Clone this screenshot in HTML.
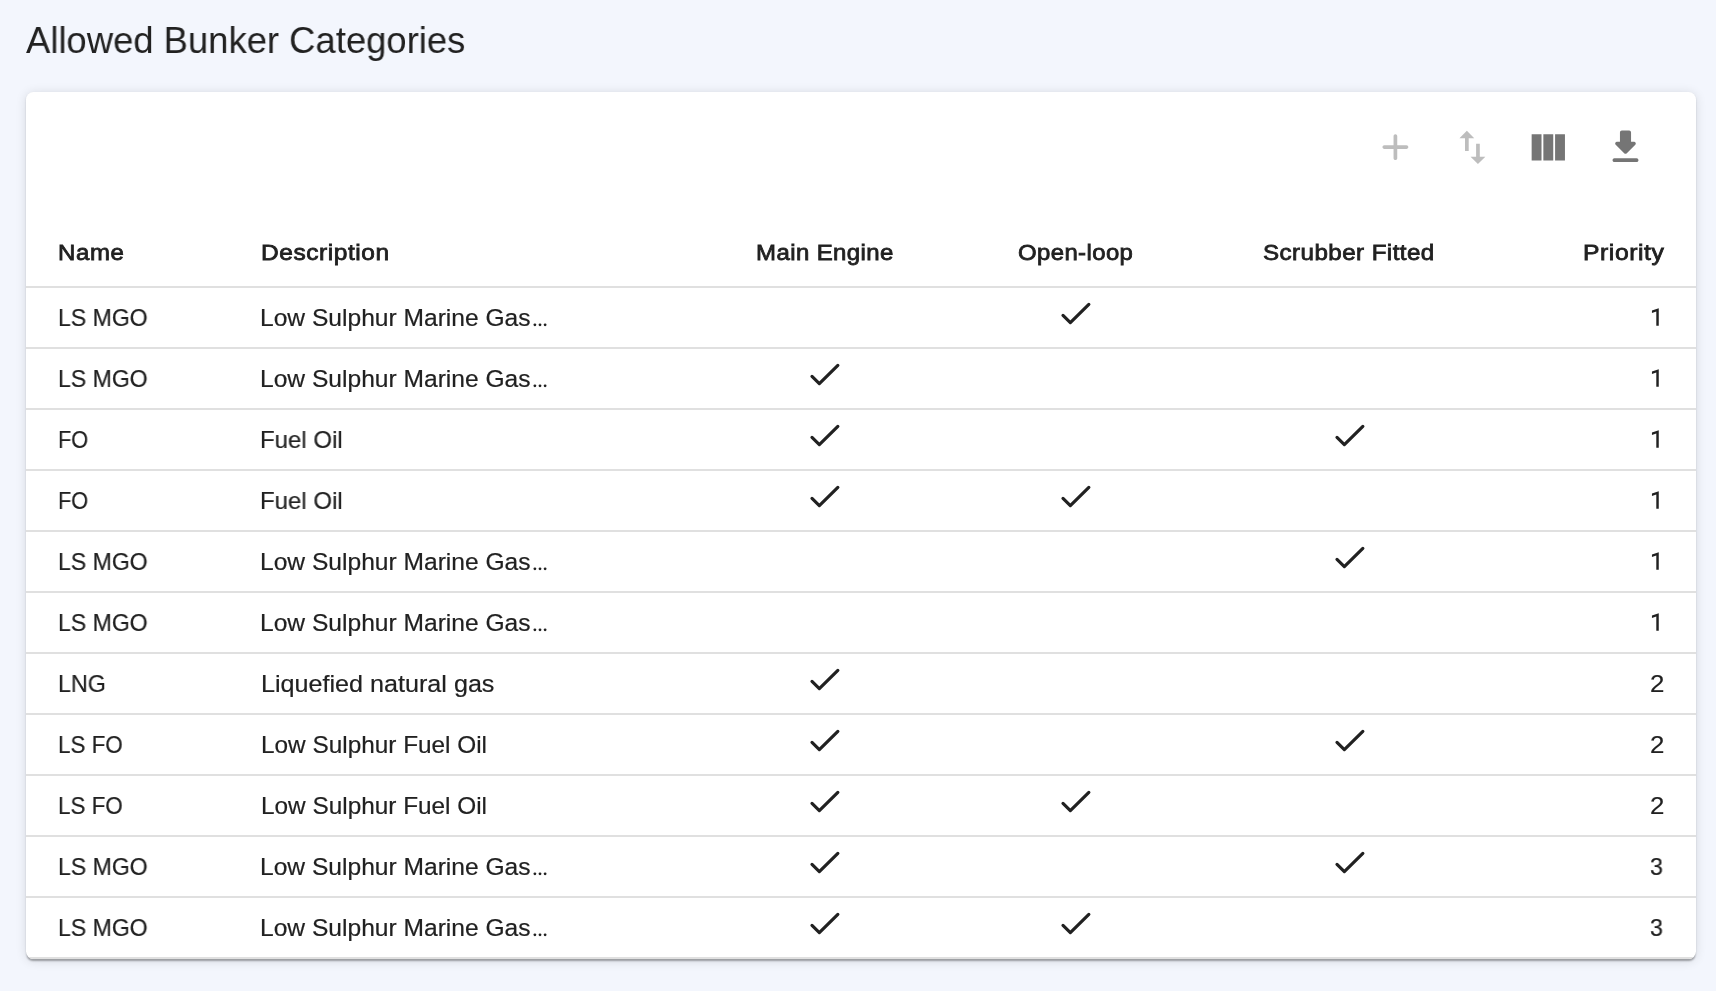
<!DOCTYPE html>
<html><head><meta charset="utf-8"><title>Allowed Bunker Categories</title><style>
html,body{margin:0;padding:0;}
body{width:1716px;height:1004px;background:#fff;position:relative;overflow:hidden;font-family:"Liberation Sans",sans-serif;color:#212121;}
.bg{position:absolute;left:0;top:0;width:1716px;height:991px;background:#f3f6fd;}
.title{will-change:transform;position:absolute;font-size:37px;line-height:37px;white-space:nowrap;transform-origin:0 0;}
.card{position:absolute;left:26px;top:92px;width:1670px;height:867px;background:#fff;border-radius:7.4px;overflow:hidden;box-shadow:0 3.7px 1.85px -1.85px rgba(0,0,0,.2),0 1.85px 1.85px 0 rgba(0,0,0,.14),0 1.85px 11px 0 rgba(0,0,0,.12);}
.t{will-change:transform;position:absolute;font-size:24.3px;line-height:24.3px;white-space:nowrap;-webkit-text-stroke:0.2px #212121;transform-origin:0 0;}
.h{will-change:transform;position:absolute;font-size:22.9px;line-height:22.9px;white-space:nowrap;-webkit-text-stroke:0.8px #212121;transform-origin:0 0;}
.hl{position:absolute;left:0;width:1670px;height:2px;background:#e0e0e0;}
.ck{position:absolute;}
.ck polyline{fill:none;stroke:#212121;stroke-width:3.2;stroke-linecap:round;stroke-linejoin:round;}
.ic{position:absolute;}
</style></head><body>
<div class="bg"></div>
<div class="title" style="left:26.31px;top:22.03px;transform:scaleX(0.9844)">Allowed Bunker Categories</div>
<div class="card"><div class="hl" style="top:194px"></div>
<div class="hl" style="top:255px"></div>
<div class="hl" style="top:316px"></div>
<div class="hl" style="top:377px"></div>
<div class="hl" style="top:438px"></div>
<div class="hl" style="top:499px"></div>
<div class="hl" style="top:560px"></div>
<div class="hl" style="top:621px"></div>
<div class="hl" style="top:682px"></div>
<div class="hl" style="top:743px"></div>
<div class="hl" style="top:804px"></div>
<div class="hl" style="top:865px"></div></div>
<svg class="ic" style="left:0;top:0" width="1716" height="300" viewBox="0 0 1716 300">
<g transform="translate(1373.2 124.9) scale(1.85)"><path fill="#bdbdbd" d="M18 13h-5v5c0 .55-.45 1-1 1s-1-.45-1-1v-5H6c-.55 0-1-.45-1-1s.45-1 1-1h5V6c0-.55.45-1 1-1s1 .45 1 1v5h5c.55 0 1 .45 1 1s-.45 1-1 1z"/></g>
<g transform="translate(1450.2 125.2) scale(1.85)"><path fill="#bdbdbd" d="M16 17.01V10h-2v7.01h-3L15 21l4-3.99h-3zM9 3L5 6.99h3V14h2V6.99h3L9 3z"/></g>
<g transform="translate(1526.1 124.8) scale(1.85 1.875)"><path fill="#757575" d="M14.67 5v14H9.33V5h5.34zm1 14H21V5h-5.33v14zm-7.34 0V5H3v14h5.33z"/></g>
<g transform="translate(1603.3 125.0) scale(1.85)"><path fill="#757575" d="M16.59 9H15V4c0-.55-.45-1-1-1h-4c-.55 0-1 .45-1 1v5H7.41c-.89 0-1.34 1.08-.71 1.71l4.59 4.59c.39.39 1.02.39 1.41 0l4.59-4.59c.63-.63.19-1.71-.7-1.71zM5 19c0 .55.45 1 1 1h12c.55 0 1-.45 1-1s-.45-1-1-1H6c-.55 0-1 .45-1 1z"/></g>
</svg>
<div class="h" style="left:58.17px;top:240.65px;transform:scaleX(1.0469);letter-spacing:0.615px">Name</div>
<div class="h" style="left:261.08px;top:240.65px;transform:scaleX(1.0704);letter-spacing:0.525px">Description</div>
<div class="h" style="left:755.51px;top:240.65px;transform:scaleX(1.0474);letter-spacing:0.396px">Main Engine</div>
<div class="h" style="left:1017.91px;top:240.65px;transform:scaleX(1.0443);letter-spacing:0.390px">Open-loop</div>
<div class="h" style="left:1263.28px;top:240.65px;transform:scaleX(1.0556);letter-spacing:0.409px">Scrubber Fitted</div>
<div class="h" style="left:1582.56px;top:240.65px;transform:scaleX(1.0795);letter-spacing:0.529px">Priority</div>
<div class="t" style="left:58.10px;top:305.52px;transform:scaleX(0.9491)">LS MGO</div>
<div class="t" style="left:260.38px;top:305.52px;transform:scaleX(1.0119)">Low Sulphur Marine Gas</div>
<svg class="ck" style="left:530px;top:287px" width="20" height="45" viewBox="0 0 20 45"><circle cx="4.9" cy="37.8" r="1.4" fill="#212121"/><circle cx="10.0" cy="37.8" r="1.4" fill="#212121"/><circle cx="15.1" cy="37.8" r="1.4" fill="#212121"/></svg>
<svg class="ck" style="left:1650px;top:287px" width="12" height="45" viewBox="0 0 12 45"><polygon points="1.95,23.60 8.76,21.37 8.76,38.70 6.30,38.70 6.30,24.60 1.95,26.00" fill="#212121"/></svg>
<svg class="ck" style="left:1055.85px;top:287.35px" width="40" height="50" viewBox="0 0 40 50"><polyline points="7.00,28.35 14.35,35.6 32.85,17.4"/></svg>
<div class="t" style="left:58.10px;top:366.52px;transform:scaleX(0.9491)">LS MGO</div>
<div class="t" style="left:260.38px;top:366.52px;transform:scaleX(1.0119)">Low Sulphur Marine Gas</div>
<svg class="ck" style="left:530px;top:348px" width="20" height="45" viewBox="0 0 20 45"><circle cx="4.9" cy="37.8" r="1.4" fill="#212121"/><circle cx="10.0" cy="37.8" r="1.4" fill="#212121"/><circle cx="15.1" cy="37.8" r="1.4" fill="#212121"/></svg>
<svg class="ck" style="left:1650px;top:348px" width="12" height="45" viewBox="0 0 12 45"><polygon points="1.95,23.60 8.76,21.37 8.76,38.70 6.30,38.70 6.30,24.60 1.95,26.00" fill="#212121"/></svg>
<svg class="ck" style="left:804.80px;top:348.35px" width="40" height="50" viewBox="0 0 40 50"><polyline points="7.00,28.35 14.35,35.6 32.85,17.4"/></svg>
<div class="t" style="left:58.18px;top:427.52px;transform:scaleX(0.8947)">FO</div>
<div class="t" style="left:260.42px;top:427.52px;transform:scaleX(0.9886)">Fuel Oil</div>
<svg class="ck" style="left:1650px;top:409px" width="12" height="45" viewBox="0 0 12 45"><polygon points="1.95,23.60 8.76,21.37 8.76,38.70 6.30,38.70 6.30,24.60 1.95,26.00" fill="#212121"/></svg>
<svg class="ck" style="left:804.80px;top:409.35px" width="40" height="50" viewBox="0 0 40 50"><polyline points="7.00,28.35 14.35,35.6 32.85,17.4"/></svg>
<svg class="ck" style="left:1329.85px;top:409.35px" width="40" height="50" viewBox="0 0 40 50"><polyline points="7.00,28.35 14.35,35.6 32.85,17.4"/></svg>
<div class="t" style="left:58.18px;top:488.52px;transform:scaleX(0.8947)">FO</div>
<div class="t" style="left:260.42px;top:488.52px;transform:scaleX(0.9886)">Fuel Oil</div>
<svg class="ck" style="left:1650px;top:470px" width="12" height="45" viewBox="0 0 12 45"><polygon points="1.95,23.60 8.76,21.37 8.76,38.70 6.30,38.70 6.30,24.60 1.95,26.00" fill="#212121"/></svg>
<svg class="ck" style="left:804.80px;top:470.35px" width="40" height="50" viewBox="0 0 40 50"><polyline points="7.00,28.35 14.35,35.6 32.85,17.4"/></svg>
<svg class="ck" style="left:1055.85px;top:470.35px" width="40" height="50" viewBox="0 0 40 50"><polyline points="7.00,28.35 14.35,35.6 32.85,17.4"/></svg>
<div class="t" style="left:58.10px;top:549.52px;transform:scaleX(0.9491)">LS MGO</div>
<div class="t" style="left:260.38px;top:549.52px;transform:scaleX(1.0119)">Low Sulphur Marine Gas</div>
<svg class="ck" style="left:530px;top:531px" width="20" height="45" viewBox="0 0 20 45"><circle cx="4.9" cy="37.8" r="1.4" fill="#212121"/><circle cx="10.0" cy="37.8" r="1.4" fill="#212121"/><circle cx="15.1" cy="37.8" r="1.4" fill="#212121"/></svg>
<svg class="ck" style="left:1650px;top:531px" width="12" height="45" viewBox="0 0 12 45"><polygon points="1.95,23.60 8.76,21.37 8.76,38.70 6.30,38.70 6.30,24.60 1.95,26.00" fill="#212121"/></svg>
<svg class="ck" style="left:1329.85px;top:531.35px" width="40" height="50" viewBox="0 0 40 50"><polyline points="7.00,28.35 14.35,35.6 32.85,17.4"/></svg>
<div class="t" style="left:58.10px;top:610.52px;transform:scaleX(0.9491)">LS MGO</div>
<div class="t" style="left:260.38px;top:610.52px;transform:scaleX(1.0119)">Low Sulphur Marine Gas</div>
<svg class="ck" style="left:530px;top:592px" width="20" height="45" viewBox="0 0 20 45"><circle cx="4.9" cy="37.8" r="1.4" fill="#212121"/><circle cx="10.0" cy="37.8" r="1.4" fill="#212121"/><circle cx="15.1" cy="37.8" r="1.4" fill="#212121"/></svg>
<svg class="ck" style="left:1650px;top:592px" width="12" height="45" viewBox="0 0 12 45"><polygon points="1.95,23.60 8.76,21.37 8.76,38.70 6.30,38.70 6.30,24.60 1.95,26.00" fill="#212121"/></svg>
<div class="t" style="left:58.06px;top:671.52px;transform:scaleX(0.9585)">LNG</div>
<div class="t" style="left:260.54px;top:671.52px;transform:scaleX(1.0348)">Liquefied natural gas</div>
<div class="t" style="left:1649.78px;top:671.52px;transform:scaleX(1.0629)">2</div>
<svg class="ck" style="left:804.80px;top:653.35px" width="40" height="50" viewBox="0 0 40 50"><polyline points="7.00,28.35 14.35,35.6 32.85,17.4"/></svg>
<div class="t" style="left:58.13px;top:732.52px;transform:scaleX(0.9221)">LS FO</div>
<div class="t" style="left:260.60px;top:732.52px;transform:scaleX(1.0022)">Low Sulphur Fuel Oil</div>
<div class="t" style="left:1649.78px;top:732.52px;transform:scaleX(1.0629)">2</div>
<svg class="ck" style="left:804.80px;top:714.35px" width="40" height="50" viewBox="0 0 40 50"><polyline points="7.00,28.35 14.35,35.6 32.85,17.4"/></svg>
<svg class="ck" style="left:1329.85px;top:714.35px" width="40" height="50" viewBox="0 0 40 50"><polyline points="7.00,28.35 14.35,35.6 32.85,17.4"/></svg>
<div class="t" style="left:58.13px;top:793.52px;transform:scaleX(0.9221)">LS FO</div>
<div class="t" style="left:260.60px;top:793.52px;transform:scaleX(1.0022)">Low Sulphur Fuel Oil</div>
<div class="t" style="left:1649.78px;top:793.52px;transform:scaleX(1.0629)">2</div>
<svg class="ck" style="left:804.80px;top:775.35px" width="40" height="50" viewBox="0 0 40 50"><polyline points="7.00,28.35 14.35,35.6 32.85,17.4"/></svg>
<svg class="ck" style="left:1055.85px;top:775.35px" width="40" height="50" viewBox="0 0 40 50"><polyline points="7.00,28.35 14.35,35.6 32.85,17.4"/></svg>
<div class="t" style="left:58.10px;top:854.52px;transform:scaleX(0.9491)">LS MGO</div>
<div class="t" style="left:260.38px;top:854.52px;transform:scaleX(1.0119)">Low Sulphur Marine Gas</div>
<svg class="ck" style="left:530px;top:836px" width="20" height="45" viewBox="0 0 20 45"><circle cx="4.9" cy="37.8" r="1.4" fill="#212121"/><circle cx="10.0" cy="37.8" r="1.4" fill="#212121"/><circle cx="15.1" cy="37.8" r="1.4" fill="#212121"/></svg>
<div class="t" style="left:1650.19px;top:854.52px;transform:scaleX(0.9545)">3</div>
<svg class="ck" style="left:804.80px;top:836.35px" width="40" height="50" viewBox="0 0 40 50"><polyline points="7.00,28.35 14.35,35.6 32.85,17.4"/></svg>
<svg class="ck" style="left:1329.85px;top:836.35px" width="40" height="50" viewBox="0 0 40 50"><polyline points="7.00,28.35 14.35,35.6 32.85,17.4"/></svg>
<div class="t" style="left:58.10px;top:915.52px;transform:scaleX(0.9491)">LS MGO</div>
<div class="t" style="left:260.38px;top:915.52px;transform:scaleX(1.0119)">Low Sulphur Marine Gas</div>
<svg class="ck" style="left:530px;top:897px" width="20" height="45" viewBox="0 0 20 45"><circle cx="4.9" cy="37.8" r="1.4" fill="#212121"/><circle cx="10.0" cy="37.8" r="1.4" fill="#212121"/><circle cx="15.1" cy="37.8" r="1.4" fill="#212121"/></svg>
<div class="t" style="left:1650.19px;top:915.52px;transform:scaleX(0.9545)">3</div>
<svg class="ck" style="left:804.80px;top:897.35px" width="40" height="50" viewBox="0 0 40 50"><polyline points="7.00,28.35 14.35,35.6 32.85,17.4"/></svg>
<svg class="ck" style="left:1055.85px;top:897.35px" width="40" height="50" viewBox="0 0 40 50"><polyline points="7.00,28.35 14.35,35.6 32.85,17.4"/></svg>
</body></html>
